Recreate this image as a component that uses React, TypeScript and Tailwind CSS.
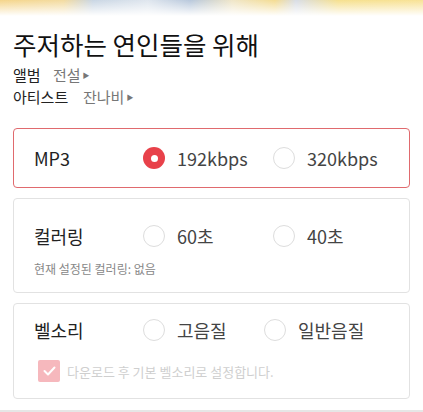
import React from "react";

const font = { fontFamily: '"Noto Sans CJK KR", "Noto Sans", sans-serif' };

function Radio({ checked }: { checked?: boolean }) {
  return checked ? (
    <span className="flex h-[22px] w-[22px] items-center justify-center rounded-full bg-[#e8414a]">
      <span className="h-[7px] w-[7px] rounded-full bg-white" />
    </span>
  ) : (
    <span className="h-[22px] w-[22px] rounded-full border border-[#dddddd] bg-white" />
  );
}

function Option({ checked, label }: { checked?: boolean; label: string }) {
  return (
    <div className="flex items-center gap-[12px]">
      <Radio checked={checked} />
      <span className="text-[18px] leading-none text-[#444]">{label}</span>
    </div>
  );
}

export default function App() {
  return (
    <div className="h-[412px] w-[423px] overflow-hidden bg-white" style={font}>
      <div className="relative h-[16px] w-full bg-[linear-gradient(90deg,#f5d58a_0%,#f3dba0_15%,#c9d6e4_22%,#dfe6ee_35%,#b8c8dc_45%,#f0e6c8_55%,#f4dc92_65%,#d8dde6_70%,#f6e08e_80%,#f8e296_100%)]">
        <div className="absolute inset-0 bg-[linear-gradient(180deg,rgba(255,255,255,0)_0%,rgba(255,255,255,1)_100%)]" />
      </div>
      <div className="px-[13px]">
        <h1 className="mt-[11px] text-[25.5px] leading-[34px] text-[#111]">주저하는 연인들을 위해</h1>
        <div className="mt-[3px] flex items-center text-[15px] leading-[22px]">
          <span className="w-[40px] text-[#222]">앨범</span>
          <span className="text-[#777]">전설</span>
          <span className="ml-[2px] text-[7px] text-[#777]">▶</span>
        </div>
        <div className="flex items-center text-[15px] leading-[22px]">
          <span className="w-[70px] text-[#222]">아티스트</span>
          <span className="text-[#777]">잔나비</span>
          <span className="ml-[2px] text-[7px] text-[#777]">▶</span>
        </div>

        <div className="mt-[20px] flex h-[60px] items-center rounded-[4px] border border-[#e06a6e] pl-[20px]">
          <span className="w-[109px] text-[18px] leading-none text-[#222]">MP3</span>
          <div className="w-[130px]">
            <Option checked label="192kbps" />
          </div>
          <Option label="320kbps" />
        </div>

        <div className="mt-[10px] h-[95px] rounded-[4px] border border-[#e2e2e2] pl-[20px] pt-[26px]">
          <div className="flex items-center">
            <span className="w-[109px] text-[18px] leading-none text-[#222]">컬러링</span>
            <div className="w-[130px]">
              <Option label="60초" />
            </div>
            <Option label="40초" />
          </div>
          <div className="mt-[14px] text-[12px] leading-[16px] text-[#888]">현재 설정된 컬러링: 없음</div>
        </div>

        <div className="mt-[10px] h-[96px] rounded-[4px] border border-[#e2e2e2] pl-[20px] pt-[15px]">
          <div className="flex items-center">
            <span className="w-[109px] text-[18px] leading-none text-[#222]">벨소리</span>
            <div className="w-[121px]">
              <Option label="고음질" />
            </div>
            <Option label="일반음질" />
          </div>
          <div className="ml-[4px] mt-[19px] flex items-center gap-[7px]">
            <span className="flex h-[22px] w-[22px] items-center justify-center rounded-[2px] bg-[#f6b8bd]">
              <svg width="13" height="10" viewBox="0 0 13 10" fill="none">
                <path d="M1.5 5 L5 8.5 L11.5 1.5" stroke="white" strokeWidth="2" strokeLinecap="round" strokeLinejoin="round" />
              </svg>
            </span>
            <span className="text-[13px] leading-none text-[#cfcfcf]">다운로드 후 기본 벨소리로 설정합니다.</span>
          </div>
        </div>
      </div>
      <div className="mt-[11px] h-[2px] w-full bg-[#e6e6e6]" />
    </div>
  );
}
